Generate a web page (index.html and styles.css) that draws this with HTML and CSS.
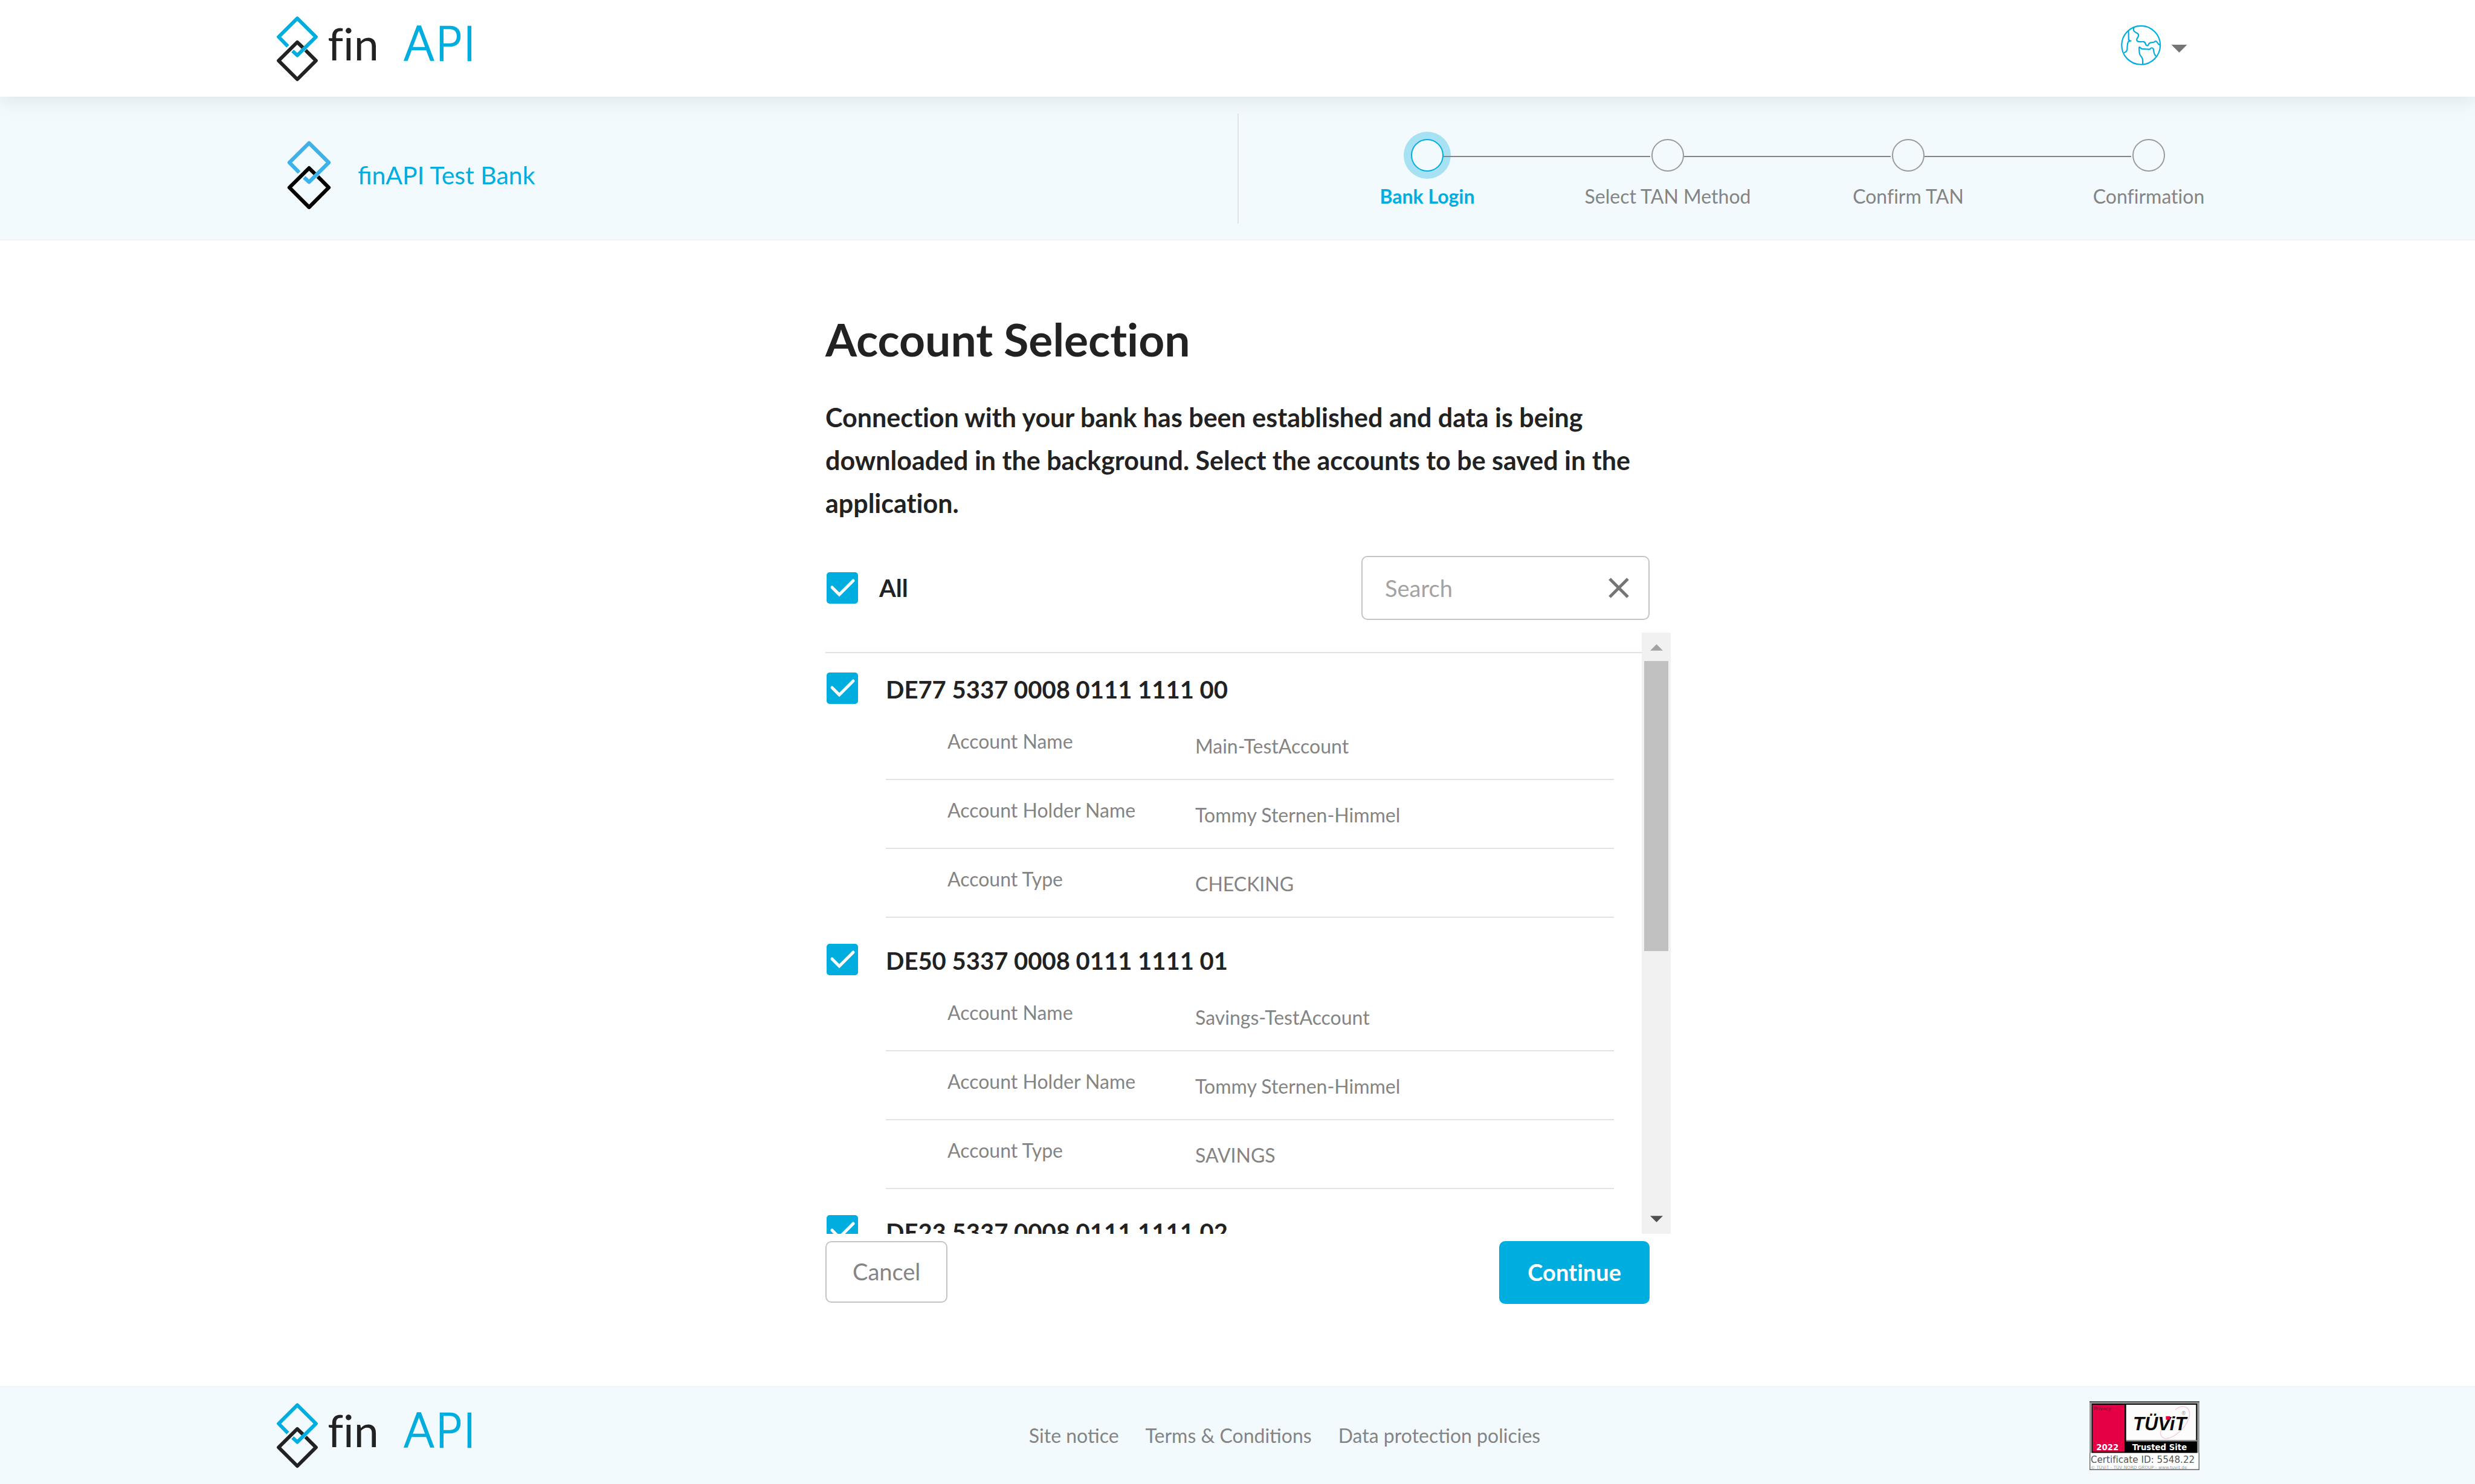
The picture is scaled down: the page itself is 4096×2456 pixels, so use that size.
FILE: index.html
```html
<!DOCTYPE html>
<html lang="en">
<head>
<meta charset="utf-8">
<title>finAPI – Account Selection</title>
<link rel="stylesheet" href="styles.css">
</head>
<body>
<svg width="0" height="0" class="defs" aria-hidden="true">
  <symbol id="mark" viewBox="68 148 222 346">
    <path class="mark-bottom" d="M212 317 L179 285 L80 383 L179 482 L278 383 L223 328"/>
    <path class="mark-top" d="M129 307 L80 257 L179 159 L278 257 L179 355 L154 332"/>
  </symbol>
</svg>

<header class="topbar">
  <div class="container topbar-row">
    <a href="#" class="logo" aria-label="finAPI">
      <svg class="logo-mark"><use href="#mark"/></svg>
      <svg class="logo-word" viewBox="330 148 808 346">
        <text class="word-fin" x="334" y="383">fin</text>
        <text class="word-api" x="1122" y="383">API</text>
      </svg>
    </a>
    <button class="lang" type="button" aria-label="Language">
      <svg class="globe" viewBox="308 126 214 214">
        <circle cx="414" cy="234" r="102"/>
        <path d="M378 138 C376 146 370 152 378 160 C386 170 400 168 401 180 C402 194 389 196 392 208 C396 220 410 215 424 215 C438 214 436 226 442 234 C448 240 454 234 456 226 C460 218 474 222 486 216 C494 206 500 220 508 230 L516 232"/>
        <path d="M348 156 L349 206 L358 211 L348 214 C341 224 342 238 341 256 C338 268 334 272 324 273"/>
        <path d="M404 242 C410 246 416 255 426 254 L460 256 C468 246 474 246 480 254 C482 266 482 286 494 291 M404 242 C406 262 402 278 412 290 C424 302 424 310 423 334"/>
      </svg>
      <svg class="caret" viewBox="0 0 28 14"><path d="M0 0H28L14 14Z"/></svg>
    </button>
  </div>
</header>

<section class="bankbar">
  <div class="container bankbar-row">
    <div class="bank">
      <svg class="bank-mark"><use href="#mark"/></svg>
      <span class="bank-name">finAPI Test Bank</span>
    </div>
    <div class="progress">
      <ol class="steps">
        <li class="step step-active"><span class="dot"></span><span>Bank Login</span></li>
        <li class="step"><span class="dot"></span><span>Select TAN Method</span></li>
        <li class="step"><span class="dot"></span><span>Confirm TAN</span></li>
        <li class="step"><span class="dot"></span><span>Confirmation</span></li>
      </ol>
    </div>
  </div>
</section>

<main class="main">
  <form class="form">
    <h1 class="title">Account Selection</h1>
    <p class="intro">Connection with your bank has been established and data is being downloaded in the background. Select the accounts to be saved in the application.</p>

    <div class="tools">
      <label class="all"><input class="check" type="checkbox" checked>All</label>
      <div class="search">
        <input class="search-input" type="text" placeholder="Search" aria-label="Search">
        <button class="clear" type="button" aria-label="Clear search">
          <svg viewBox="0 0 34 34"><path d="M2 2L32 32M32 2L2 32"/></svg>
        </button>
      </div>
    </div>

    <div class="list">
      <div class="accounts">
        <section class="account">
          <label class="iban"><input class="check" type="checkbox" checked><span>DE77 5337 0008 0111 1111 00</span></label>
          <dl class="details">
            <div class="detail"><dt>Account Name</dt><dd>Main-TestAccount</dd></div>
            <div class="detail"><dt>Account Holder Name</dt><dd>Tommy Sternen-Himmel</dd></div>
            <div class="detail"><dt>Account Type</dt><dd>CHECKING</dd></div>
          </dl>
        </section>
        <section class="account">
          <label class="iban"><input class="check" type="checkbox" checked><span>DE50 5337 0008 0111 1111 01</span></label>
          <dl class="details">
            <div class="detail"><dt>Account Name</dt><dd>Savings-TestAccount</dd></div>
            <div class="detail"><dt>Account Holder Name</dt><dd>Tommy Sternen-Himmel</dd></div>
            <div class="detail"><dt>Account Type</dt><dd>SAVINGS</dd></div>
          </dl>
        </section>
        <section class="account">
          <label class="iban"><input class="check" type="checkbox" checked><span>DE23 5337 0008 0111 1111 02</span></label>
        </section>
      </div>
      <div class="scrollbar" aria-hidden="true">
        <svg class="arrow arrow-up" viewBox="0 0 22 11"><path d="M11 0L22 11H0Z"/></svg>
        <div class="thumb"></div>
        <svg class="arrow arrow-down" viewBox="0 0 22 11"><path d="M0 0H22L11 11Z"/></svg>
      </div>
    </div>

    <div class="actions">
      <button class="btn btn-cancel" type="button">Cancel</button>
      <button class="btn btn-continue" type="submit">Continue</button>
    </div>
  </form>
</main>

<footer class="footer">
  <div class="container footer-row">
    <a href="#" class="logo" aria-label="finAPI">
      <svg class="logo-mark"><use href="#mark"/></svg>
      <svg class="logo-word" viewBox="330 148 808 346">
        <text class="word-fin" x="334" y="383">fin</text>
        <text class="word-api" x="1122" y="383">API</text>
      </svg>
    </a>
    <nav class="links">
      <a href="#">Site notice</a>
      <a href="#">Terms &amp; Conditions</a>
      <a href="#">Data protection policies</a>
    </nav>
    <svg class="badge" viewBox="84 78 576 360" role="img" aria-label="TÜViT Trusted Site">
      <rect x="86" y="80" width="572" height="356" fill="#fff" stroke="#666" stroke-width="5"/>
      <rect x="84" y="78" width="576" height="270" fill="#999"/>
      <rect x="84" y="78" width="576" height="5" fill="#444"/>
      <rect x="96" y="90" width="552" height="258" fill="#000"/>
      <rect x="100" y="96" width="168" height="246" fill="#e50046"/>
      <rect x="276" y="96" width="366" height="186" fill="#fcfcfc"/>
      <path d="M276 285H648" stroke="#999" stroke-width="6"/>
      <path d="M534 122C570 92 612 104 608 152C600 210 520 280 478 272C456 266 452 246 458 232" fill="none" stroke="#f6cdd8" stroke-width="5"/>
      <text class="badge-wide" x="106" y="126" font-size="25" fill="#5a1a2e">Privacy</text>
      <text class="badge-bold" x="120" y="335" font-size="42" fill="#fff">2022</text>
      <text class="badge-bold" x="308" y="335" font-size="42" fill="#fff">Trusted Site</text>
      <text class="badge-logo" x="312" y="228" font-size="98" fill="#0a0a0a">TÜViT</text>
      <rect x="484" y="156" width="22" height="19" fill="#e50046"/>
      <text class="badge-wide" x="564" y="152" font-size="26" fill="#999">®</text>
      <text class="badge-wide" x="90" y="400" font-size="48" fill="#555">Certificate ID: 5548.22</text>
      <text class="badge-wide" x="90" y="431" font-size="23" fill="#999">© TÜViT - TÜV NORD GROUP - www.tuvit.de</text>
    </svg>
  </div>
</footer>
</body>
</html>
```
FILE: styles.css
```css
:root {
  --blue: #00addf;
  --ink: #222222;
  --gray: #848484;
  --line: #e2e2e9;
  --border: #c4c4c4;
  --tint: #f2fafd;
}

* {
  box-sizing: border-box;
}

body {
  margin: 0;
  min-height: 100vh;
  display: flex;
  flex-direction: column;
  background: #fff;
  color: var(--ink);
  font-family: Lato, "Noto Sans", sans-serif;
  font-size: 32px;
  line-height: 40px;
  font-variant-ligatures: none;
}

button,
input {
  font: inherit;
  font-variant-ligatures: none;
  color: inherit;
  margin: 0;
  padding: 0;
}

.defs {
  position: absolute;
}

.container {
  width: calc(100% - 64px);
  max-width: 3184px;
  margin: 0 auto;
}

/* Logo */
.mark-top,
.mark-bottom {
  fill: none;
  stroke-width: 19;
  stroke-linejoin: round;
}

.mark-top {
  stroke: var(--mark-top, #00addf);
}

.mark-bottom {
  stroke: var(--mark-bottom, #222222);
}

.logo {
  display: flex;
  gap: 13px;
  padding-left: 1px;
}

.logo-mark {
  width: 70px;
  height: 108px;
}

.logo-word {
  width: 254px;
  height: 108px;
}

.word-fin {
  font-size: 236px;
  fill: var(--ink);
}

.word-api {
  font-family: "DejaVu Sans", sans-serif;
  font-weight: 200;
  font-size: 244px;
  text-anchor: end;
  fill: var(--blue);
  stroke: var(--blue);
  stroke-width: 8;
}

/* Top bar */
.topbar {
  position: relative;
  background: #fff;
  box-shadow: 0 6px 32px rgba(0, 0, 0, 0.09);
}

.topbar-row {
  display: flex;
  justify-content: space-between;
  align-items: flex-start;
  padding: 27px 0 25px;
}

.lang {
  display: flex;
  align-items: center;
  gap: 16px;
  padding: 14px 20px 0 0;
  border: 0;
  background: none;
}

.globe {
  width: 67px;
  height: 67px;
  fill: none;
  stroke: var(--blue);
  stroke-width: 7;
}

.caret {
  width: 27px;
  height: 13px;
  margin-top: 12px;
  fill: #757575;
}

/* Bank and progress */
.bankbar {
  background: var(--tint);
  border-bottom: 2px solid #f0f5fa;
}

.bankbar-row {
  display: grid;
  grid-template-columns: 1fr 1fr;
  padding: 28px 0 26px;
}

.bank {
  display: flex;
  align-items: center;
  gap: 44px;
  padding: 22px 0 0 19px;
}

.bank-mark {
  width: 73px;
  height: 114px;
  --mark-top: #3eb2e8;
  --mark-bottom: #000;
}

.bank-name {
  font-size: 41px;
  line-height: 48px;
  color: var(--blue);
  font-variant-ligatures: normal;
}

.progress {
  min-height: 182px;
  border-left: 2px solid var(--line);
}

.steps {
  display: grid;
  grid-template-columns: repeat(4, 1fr);
  list-style: none;
  margin: 0 -115px 0 113px;
  padding: 42px 0 0;
}

.step {
  position: relative;
  display: flex;
  flex-direction: column;
  align-items: center;
  gap: 21px;
  color: var(--gray);
}

.dot {
  width: 54px;
  height: 54px;
  border: 2px solid #9a9a9a;
  border-radius: 50%;
  background: var(--tint);
}

.step:not(:last-child)::after {
  content: "";
  position: absolute;
  top: 28px;
  left: calc(50% + 27px);
  width: calc(100% - 56px);
  height: 2px;
  background: var(--gray);
}

.step-active {
  color: var(--blue);
  font-weight: 700;
}

.step-active .dot {
  border-color: var(--blue);
  box-shadow: 0 0 0 12px #a6e2f4;
}

/* Form */
.main {
  flex: 1;
  padding: 121px 32px 136px;
}

.form {
  max-width: 1364px;
  margin: 0 auto;
}

.title {
  margin: 0 0 52px;
  font-size: 75px;
  line-height: 84px;
  font-weight: 700;
}

.intro {
  margin: 0 0 52px;
  font-size: 43px;
  line-height: 71px;
  font-weight: 700;
}

.tools {
  display: flex;
  justify-content: space-between;
  align-items: center;
}

.check {
  appearance: none;
  flex: none;
  width: 52px;
  height: 52px;
  border-radius: 5px;
  background: var(--blue) url("data:image/svg+xml,%3Csvg xmlns='http://www.w3.org/2000/svg' viewBox='0 0 52 52'%3E%3Cpath d='M9 25L21 37L44 14' fill='none' stroke='white' stroke-width='5' stroke-linecap='round'/%3E%3C/svg%3E");
}

.all,
.iban {
  display: flex;
  align-items: center;
  font-size: 40px;
  line-height: 48px;
  font-weight: 700;
  padding-left: 2px;
}

.all {
  gap: 35px;
}

.search {
  display: flex;
  align-items: center;
  width: 477px;
  height: 106px;
  padding: 0 32px 0 37px;
  border: 2px solid var(--border);
  border-radius: 10px;
}

.search-input {
  flex: 1;
  min-width: 0;
  border: 0;
  outline: 0;
  background: none;
  font-size: 38px;
  line-height: 48px;
}

.search-input::placeholder {
  color: #a3a3a3;
}

.clear {
  display: flex;
  border: 0;
  background: none;
}

.clear svg {
  width: 34px;
  height: 34px;
  fill: none;
  stroke: #757575;
  stroke-width: 5;
}

/* Account list */
.list {
  display: flex;
  height: 995px;
  margin: 21px -35px 12px 0;
}

.accounts {
  flex: 1;
  overflow: hidden;
  display: flex;
  flex-direction: column;
  gap: 11px;
  padding-top: 32px;
}

.account:first-child {
  border-top: 2px solid var(--line);
}

.iban {
  gap: 46px;
  padding-top: 32px;
  padding-bottom: 12px;
}

.iban span {
  padding-top: 4px;
}

.details {
  margin: 0 46px 0 100px;
  color: var(--gray);
}

.detail {
  display: grid;
  grid-template-columns: 410px 1fr;
  padding: 30px 0 34px 102px;
  border-bottom: 2px solid var(--line);
}

.detail dd {
  margin: 0;
  padding-top: 8px;
}

.scrollbar {
  width: 48px;
  display: flex;
  flex-direction: column;
  align-items: center;
  padding: 19px 0;
  background: #f1f1f1;
}

.arrow {
  width: 21px;
  height: 11px;
}

.arrow-up {
  fill: #a3a3a3;
}

.arrow-down {
  fill: #505050;
  margin-top: auto;
}

.thumb {
  width: 40px;
  height: 480px;
  margin-top: 17px;
  background: #c1c1c1;
}

/* Actions */
.actions {
  display: flex;
  justify-content: space-between;
  align-items: flex-start;
}

.btn {
  font-size: 38px;
  line-height: 48px;
  border-radius: 10px;
}

.btn-cancel {
  padding: 24px 43px 26px;
  border: 2px solid var(--border);
  background: #fff;
  color: var(--gray);
}

.btn-continue {
  padding: 27px 47px 29px;
  border: 0;
  background: var(--blue);
  color: #fff;
  font-weight: 700;
}

/* Footer */
.footer {
  background: var(--tint);
  border-top: 2px solid #f0f5fa;
}

.footer-row {
  display: flex;
  justify-content: space-between;
  align-items: center;
  padding: 23px 0;
}

.links {
  display: flex;
  gap: 44px;
  font-variant-ligatures: normal;
}

.links a {
  color: var(--gray);
  text-decoration: none;
}

.badge {
  width: 182px;
  height: 114px;
}

.badge-wide {
  font-family: "DejaVu Sans", sans-serif;
}

.badge-bold {
  font-family: "DejaVu Sans", sans-serif;
  font-weight: 700;
}

.badge-logo {
  font-family: "Liberation Sans", sans-serif;
  font-weight: 700;
  font-style: italic;
}
```
